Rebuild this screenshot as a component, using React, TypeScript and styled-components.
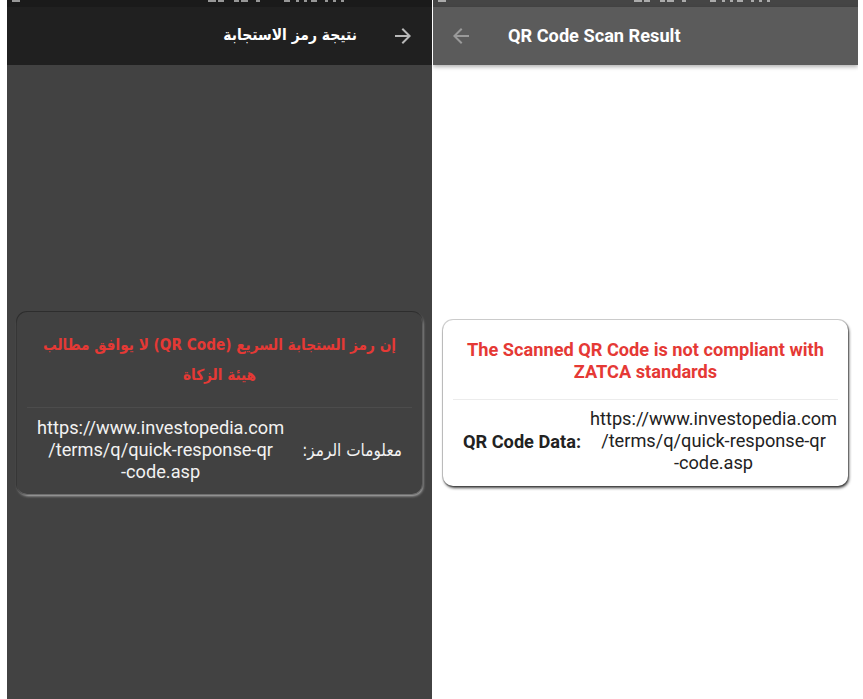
import * as React from 'react'
import styled, { createGlobalStyle } from 'styled-components'

const GlobalStyle = createGlobalStyle`
  html, body {
    margin: 0;
    padding: 0;
    background: #ffffff;
    overflow: hidden;
  }
  body {
    font-family: Roboto, "DejaVu Sans", sans-serif;
  }
`

const ARABIC = '"DejaVu Sans Condensed", "DejaVu Sans", Roboto, sans-serif'

const Page = styled.div`
  display: flex;
  gap: 1px;
  padding-left: 7px;
  width: 863px;
  height: 699px;
  box-sizing: border-box;
`

const Screen = styled.div<{ $dark?: boolean }>`
  width: 425px;
  height: 699px;
  display: flex;
  flex-direction: column;
  background: ${p => (p.$dark ? '#424242' : '#ffffff')};
  direction: ${p => (p.$dark ? 'rtl' : 'ltr')};
  overflow: hidden;
`

const StatusBar = styled.div<{ $dark?: boolean }>`
  height: 7px;
  flex-shrink: 0;
  display: flex;
  align-items: flex-start;
  direction: ltr;
  padding: 0 6px 0 5px;
  background: ${p => (p.$dark ? '#1a1a1a' : '#454545')};
`

const StatusBit = styled.span<{ $w: number; $gap?: number }>`
  display: block;
  width: ${p => p.$w}px;
  height: 2px;
  margin-left: ${p => p.$gap ?? 2}px;
  background: rgba(255, 255, 255, 0.55);
`

const AppBar = styled.div<{ $dark?: boolean }>`
  height: 58px;
  flex-shrink: 0;
  display: flex;
  align-items: center;
  position: relative;
  z-index: 1;
  padding: ${p => (p.$dark ? '0 17px 0 0' : '0 0 0 16px')};
  background: ${p => (p.$dark ? '#202020' : '#5b5b5b')};
  box-shadow: ${p => (p.$dark ? 'none' : '0 2px 4px rgba(0,0,0,0.3)')};
`

const BackIcon = styled.svg<{ $dark?: boolean }>`
  width: 24px;
  height: 24px;
  flex-shrink: 0;
  fill: ${p => (p.$dark ? '#b8b8b8' : '#9a9a9a')};
`

const Title = styled.div<{ $dark?: boolean }>`
  color: #ffffff;
  font-weight: 700;
  font-size: ${p => (p.$dark ? '15.5px' : '18.2px')};
  font-family: ${p => (p.$dark ? ARABIC : 'Roboto, sans-serif')};
  margin-inline-start: ${p => (p.$dark ? '34px' : '35px')};
  margin-top: -2px;
`

const Body = styled.div<{ $top: number }>`
  flex: 1;
  padding: ${p => p.$top}px 10px 0;
`

const Card = styled.div<{ $dark?: boolean }>`
  border-radius: 10px;
  padding: ${p => (p.$dark ? '18px 10px 11px' : '19px 10px 12px')};
  background: ${p => (p.$dark ? '#414141' : '#ffffff')};
  box-shadow: ${p =>
    p.$dark
      ? '0 0 0 1px rgba(0,0,0,0.35), 1px 2px 3px rgba(210,210,210,0.85)'
      : '0 0 0 1px rgba(0,0,0,0.18), 1px 2px 3px rgba(0,0,0,0.75)'};
`

const Headline = styled.div<{ $dark?: boolean }>`
  color: #e53935;
  font-weight: 700;
  text-align: center;
  white-space: nowrap;
  font-size: ${p => (p.$dark ? '15.2px' : '18.2px')};
  line-height: ${p => (p.$dark ? '30px' : '22px')};
  font-family: ${p => (p.$dark ? ARABIC : 'Roboto, sans-serif')};
`

const Divider = styled.div<{ $dark?: boolean }>`
  height: 1px;
  margin: ${p => (p.$dark ? '17px 0 9px' : '16px 0 8px')};
  background: ${p => (p.$dark ? '#4c4c4c' : '#ececec')};
`

const DataRow = styled.div<{ $dark?: boolean }>`
  display: flex;
  align-items: center;
  padding-inline-start: 10px;
  gap: 8px;
`

const Label = styled.div<{ $dark?: boolean }>`
  flex-shrink: 0;
  font-size: ${p => (p.$dark ? '17px' : '18.2px')};
  font-weight: ${p => (p.$dark ? 400 : 700)};
  font-family: ${p => (p.$dark ? ARABIC : 'Roboto, sans-serif')};
  color: ${p => (p.$dark ? '#f2f2f2' : '#222222')};
`

const Value = styled.div<{ $dark?: boolean }>`
  flex: 1;
  direction: ltr;
  text-align: center;
  font-size: 18.2px;
  line-height: 22px;
  font-family: Roboto, sans-serif;
  color: ${p => (p.$dark ? '#f2f2f2' : '#222222')};
`

const ARROW = 'M20 11H7.83l5.59-5.59L12 4l-8 8 8 8 1.41-1.41L7.83 13H20v-2z'

function Status(props: { dark?: boolean }) {
  return <StatusBar $dark={props.dark}>
    <StatusBit $w={8} $gap={0} />
    <StatusBit $w={8} $gap={188} />
    <StatusBit $w={6} />
    <StatusBit $w={5} $gap={10} />
    <StatusBit $w={7} />
    <StatusBit $w={4} $gap={8} />
    <StatusBit $w={6} $gap={24} />
    <StatusBit $w={3} $gap={6} />
    <StatusBit $w={3} $gap={5} />
    <StatusBit $w={6} $gap={4} />
    <StatusBit $w={3} $gap={8} />
    <StatusBit $w={3} $gap={5} />
    <StatusBit $w={3} $gap={5} />
  </StatusBar>
}

function ResultScreen(props: { dark?: boolean }) {
  const { dark } = props
  const url = <>https://www.investopedia.com<br />/terms/q/quick-response-qr<br />-code.asp</>

  return <Screen $dark={dark}>
    <Status dark={dark} />
    <AppBar $dark={dark}>
      <BackIcon $dark={dark} viewBox="0 0 24 24" style={dark ? { transform: 'scaleX(-1)' } : undefined}>
        <path d={ARROW} />
      </BackIcon>
      <Title $dark={dark}>{dark ? 'نتيجة رمز الاستجابة' : 'QR Code Scan Result'}</Title>
    </AppBar>
    <Body $top={dark ? 247 : 255}>
      <Card $dark={dark}>
        <Headline $dark={dark}>
          {dark
            ? <>إن رمز الستجابة السريع (QR Code) لا يوافق مطالب<br />هيئة الزكاة</>
            : <>The Scanned QR Code is not compliant with<br />ZATCA standards</>}
        </Headline>
        <Divider $dark={dark} />
        <DataRow $dark={dark}>
          <Label $dark={dark}>{dark ? 'معلومات الرمز:' : 'QR Code Data:'}</Label>
          <Value $dark={dark}>{url}</Value>
        </DataRow>
      </Card>
    </Body>
  </Screen>
}

export default function App() {
  return <>
    <GlobalStyle />
    <Page>
      <ResultScreen dark />
      <ResultScreen />
    </Page>
  </>
}
